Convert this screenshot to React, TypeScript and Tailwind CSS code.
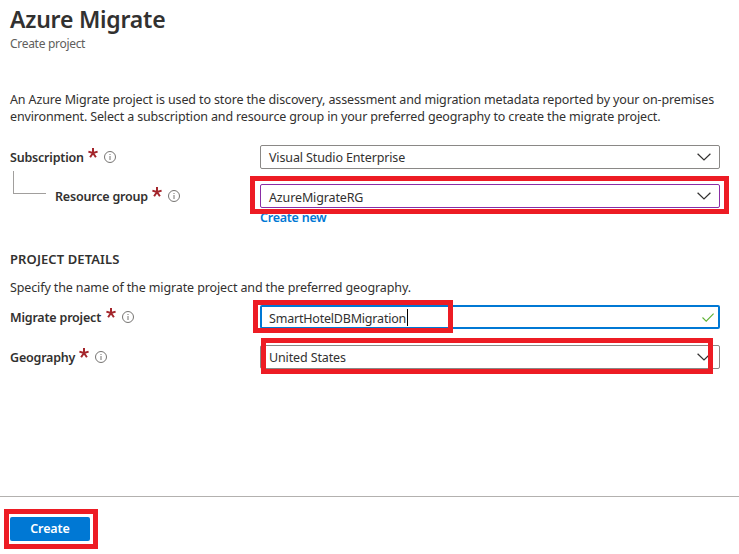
import type { ReactNode } from "react";

function InfoIcon() {
  return (
    <svg className="block h-3 w-3 shrink-0" viewBox="0 0 12 12" fill="none" stroke="#666462">
      <circle cx="6" cy="6" r="5.5" strokeWidth="0.9" />
      <path d="M6 5v4M6 3v1" strokeWidth="0.9" />
    </svg>
  );
}

function Required() {
  return (
    <svg className="block h-[10px] w-[10px] shrink-0" viewBox="0 0 10 10" stroke="#a4262c" strokeWidth="2">
      <path d="M5 5V0M5 5L.4 3.6M5 5l4.6-1.4M5 5L2.1 9.2M5 5l2.9 4.2" />
    </svg>
  );
}

function Chevron() {
  return (
    <svg className="block h-2 w-[14px] shrink-0" viewBox="0 0 14 8" fill="none" stroke="#323130" strokeWidth="1.2">
      <path d="M.6.7L7 7 13.4.7" />
    </svg>
  );
}

function Label({ text, width }: { text: string; width: string }) {
  return (
    <div className="flex h-6 items-center">
      <span className={`whitespace-nowrap font-semibold tracking-[-0.2px] ${width}`}>{text}</span>
      <span className="-mt-2">
        <Required />
      </span>
      <span className="ml-[6px]">
        <InfoIcon />
      </span>
    </div>
  );
}

function Field({ border, children, icon }: { border: string; children: ReactNode; icon: ReactNode }) {
  return (
    <div className={`flex h-6 w-[460px] items-center justify-between rounded-[2px] bg-white tracking-[-0.13px] ${border}`}>
      {children}
      {icon}
    </div>
  );
}

export default function App() {
  return (
    <main className="flex h-[554px] w-[739px] flex-col overflow-hidden bg-white font-['Noto_Sans','Open_Sans',sans-serif] text-[12.5px] leading-[17px] text-[#323130]">
      <header className="h-[91px] pl-[10px] pt-[3px]">
        <h1 className="h-[33px] whitespace-nowrap text-[23px] font-semibold leading-8 tracking-[-0.22px]">Azure Migrate</h1>
        <p className="whitespace-nowrap text-[12px] leading-4 tracking-[-0.3px] text-[#605e5c]">Create project</p>
      </header>

      <div className="h-[54px] whitespace-nowrap pl-[10px]">
        <p className="tracking-[-0.125px]">An Azure Migrate project is used to store the discovery, assessment and migration metadata reported by your on-premises</p>
        <p className="tracking-[-0.145px]">environment. Select a subscription and resource group in your preferred geography to create the migrate project.</p>
      </div>

      <div className="flex h-[39px]">
        <div className="w-[260px] pl-[10px]">
          <Label text="Subscription" width="w-[78px]" />
        </div>
        <Field border="border border-[#8a8886] pl-2 pr-[8px]" icon={<Chevron />}>
          <span>Visual Studio Enterprise</span>
        </Field>
      </div>

      <div className="flex h-[67px]">
        <div className="flex w-[260px]">
          <div className="ml-[13px] -mt-[13px] h-[23px] w-[33px] border-b border-l border-[#a19f9d]" />
          <div className="ml-[9px]">
            <Label text="Resource group" width="w-[97px]" />
          </div>
        </div>
        <div className="relative">
          <Field border="border border-[#8a2da5] pl-2 pr-[8px]" icon={<Chevron />}>
            <span className="pt-[2px]">AzureMigrateRG</span>
          </Field>
          <a className="block whitespace-nowrap pt-px font-semibold tracking-[-0.25px] text-[#0078d4]">Create new</a>
          <div className="absolute -left-[10px] -top-2 h-[38px] w-[479px] border-[5px] border-[#ed1c24]" />
        </div>
      </div>

      <section className="h-[54px] whitespace-nowrap pl-[10px]">
        <h2 className="h-7 text-[13px] font-semibold tracking-[0.1px]">PROJECT DETAILS</h2>
        <p className="tracking-[-0.12px]">Specify the name of the migrate project and the preferred geography.</p>
      </section>

      <div className="flex h-10">
        <div className="w-[260px] pl-[10px]">
          <Label text="Migrate project" width="w-[96px]" />
        </div>
        <div className="relative">
          <Field
            border="border-2 border-[#0078d4] pl-[7px] pr-1"
            icon={
              <svg className="block h-[9px] w-3" viewBox="0 0 12 9" fill="none" stroke="#5fb234" strokeWidth="1.1">
                <path d="M.5 4.5L4.2 8.1 11.6.6" />
              </svg>
            }
          >
            <span className="flex items-center">
              <span className="w-[138px] whitespace-nowrap pt-[2px] tracking-[-0.2px]">SmartHotelDBMigration</span>
              <span className="h-[17px] w-px bg-black" />
            </span>
          </Field>
          <div className="absolute -left-[7px] -top-[5px] h-[33px] w-[200px] border-[5px] border-[#ed1c24]" />
        </div>
      </div>

      <div className="flex h-[151px]">
        <div className="w-[260px] pl-[10px]">
          <Label text="Geography" width="w-[69px]" />
        </div>
        <div className="relative">
          <Field border="border border-[#8a8886] pl-2 pr-[8px]" icon={<Chevron />}>
            <span>United States</span>
          </Field>
          <div className="absolute -top-[7px] left-px h-9 w-[452px] border-[5px] border-[#ed1c24]" />
        </div>
      </div>

      <footer className="border-t border-[#b3b1af] pl-1 pt-3">
        <div className="h-10 w-[94px] border-[5px] border-[#ed1c24] pl-px pt-[3px]">
          <button className="block h-6 w-20 rounded-[2px] bg-[#0078d4] pb-[2px] text-center font-semibold tracking-[-0.1px] text-white">Create</button>
        </div>
      </footer>
    </main>
  );
}
